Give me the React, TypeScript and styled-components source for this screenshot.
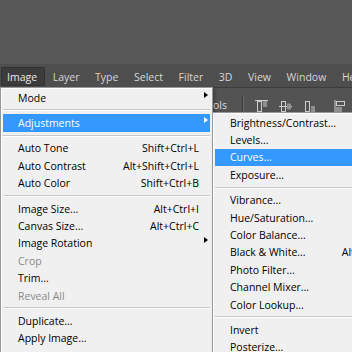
import React from 'react'
import styled, { createGlobalStyle, css } from 'styled-components';

const GlobalStyle = createGlobalStyle`
  html, body {
    margin: 0;
    padding: 0;
    background: #535353;
  }
  * {
    box-sizing: border-box;
  }
`;

const Screen = styled.div`
  width: 352px;
  height: 352px;
  overflow: hidden;
  display: flex;
  flex-direction: column;
  background: #585858;
  font-family: "Open Sans", "Noto Sans", sans-serif;
  font-size: 10.5px;
`;

const TitleArea = styled.div`
  height: 64px;
  flex-shrink: 0;
  background: #585858;
`;

const MenuBar = styled.div`
  height: 23px;
  flex-shrink: 0;
  display: flex;
  align-items: flex-end;
  gap: 1.6px;
  padding: 0 0 1px 1px;
  background: #4e4e4e;
  white-space: nowrap;
`;

const BarItem = styled.div<{ $open?: boolean }>`
  height: 19px;
  display: flex;
  align-items: center;
  padding: 0 7px 0 5px;
  color: #d6d6d6;
  border: 1px solid transparent;
  border-radius: 1px;
  ${({ $open }) =>
    $open &&
    css`
      background: #3c3c3c;
      border-color: #313131;
      color: #e8e8e8;
    `}
`;

const Workspace = styled.div`
  flex: 1;
  position: relative;
  background: #535353;
`;

const OptionsBar = styled.div`
  height: 35px;
  display: flex;
  align-items: center;
  padding-left: 8px;
  border-top: 1px solid #3c3c3c;
  white-space: nowrap;
  color: #dedede;
`;

const OptionGroup = styled.div`
  width: 219px;
  display: flex;
  align-items: center;
  justify-content: flex-end;
  gap: 5px;
`;

const CheckBox = styled.span`
  width: 11px;
  height: 11px;
  border: 1px solid #2e2e2e;
  background: #6a6a6a;
`;

const Divider = styled.span`
  width: 1px;
  height: 20px;
  margin-left: 15px;
  background: #3a3a3a;
  box-shadow: 1px 0 0 #666666;
`;

const AlignGroup = styled.div`
  display: flex;
  align-items: center;
  gap: 11px;
  margin-left: 12px;
  margin-top: 3px;

  & > svg:last-child {
    margin-left: 7px;
  }
`;

const Dropdown = styled.div<{ $left: number; $top: number; $width: number }>`
  position: absolute;
  left: ${({ $left }) => $left}px;
  top: ${({ $top }) => $top}px;
  width: ${({ $width }) => $width}px;
  padding: 1px 2px;
  background: #f0f0f0;
  border: 1px solid #979797;
  box-shadow: inset 1px 1px 0 #ffffff, 2px 2px 3px rgba(0, 0, 0, 0.25);
  color: #000000;
  white-space: nowrap;
`;

const MenuRow = styled.div<{ $active?: boolean; $disabled?: boolean }>`
  position: relative;
  height: 17.4px;
  display: flex;
  align-items: center;
  justify-content: space-between;
  padding: 0 11px 0 15px;
  color: ${({ $disabled }) => ($disabled ? '#8b8b8b' : '#000000')};
  ${({ $active }) =>
    $active &&
    css`
      background: #3399ff;
      color: #ffffff;
    `}
`;

const Shortcut = styled.span`
  margin-left: 24px;
`;

const SubArrow = styled.span<{ $active?: boolean }>`
  position: absolute;
  right: 2px;
  top: calc(50% - 6px);
  width: 0;
  height: 0;
  border-top: 3.5px solid transparent;
  border-bottom: 3.5px solid transparent;
  border-left: 4px solid ${({ $active }) => ($active ? '#ffffff' : '#000000')};
`;

const Separator = styled.div`
  height: 8px;
  padding-top: 3px;

  &::before {
    content: '';
    display: block;
    height: 1px;
    background: #c8c8c8;
    border-bottom: 1px solid #ffffff;
    box-sizing: content-box;
  }
`;

type Entry =
  | 'sep'
  | { label: string; shortcut?: string; sub?: boolean; disabled?: boolean; active?: boolean };

const imageMenu: Entry[] = [
  { label: 'Mode', sub: true },
  'sep',
  { label: 'Adjustments', sub: true, active: true },
  'sep',
  { label: 'Auto Tone', shortcut: 'Shift+Ctrl+L' },
  { label: 'Auto Contrast', shortcut: 'Alt+Shift+Ctrl+L' },
  { label: 'Auto Color', shortcut: 'Shift+Ctrl+B' },
  'sep',
  { label: 'Image Size...', shortcut: 'Alt+Ctrl+I' },
  { label: 'Canvas Size...', shortcut: 'Alt+Ctrl+C' },
  { label: 'Image Rotation', sub: true },
  { label: 'Crop', disabled: true },
  { label: 'Trim...' },
  { label: 'Reveal All', disabled: true },
  'sep',
  { label: 'Duplicate...' },
  { label: 'Apply Image...' },
  { label: 'Calculations...' },
];

const adjustMenu: Entry[] = [
  { label: 'Brightness/Contrast...' },
  { label: 'Levels...', shortcut: 'Ctrl+L' },
  { label: 'Curves...', shortcut: 'Ctrl+M', active: true },
  { label: 'Exposure...' },
  'sep',
  { label: 'Vibrance...' },
  { label: 'Hue/Saturation...', shortcut: 'Ctrl+U' },
  { label: 'Color Balance...', shortcut: 'Ctrl+B' },
  { label: 'Black & White...', shortcut: 'Alt+Shift+Ctrl+B' },
  { label: 'Photo Filter...' },
  { label: 'Channel Mixer...' },
  { label: 'Color Lookup...' },
  'sep',
  { label: 'Invert', shortcut: 'Ctrl+I' },
  { label: 'Posterize...' },
  { label: 'Threshold...' },
];

const barItems = ['Image', 'Layer', 'Type', 'Select', 'Filter', '3D', 'View', 'Window', 'Help'];

function MenuList({ items }: { items: Entry[] }) {
  return (
    <>
      {items.map((item, i) =>
        item === 'sep' ? (
          <Separator key={i} />
        ) : (
          <MenuRow key={i} $active={item.active} $disabled={item.disabled}>
            <span>{item.label}</span>
            {item.shortcut && <Shortcut>{item.shortcut}</Shortcut>}
            {item.sub && <SubArrow $active={item.active} />}
          </MenuRow>
        )
      )}
    </>
  );
}

// align icons of the move tool options
function AlignIcon({ kind }: { kind: 'top' | 'middle' | 'bottom' | 'left' }) {
  const light = '#cdcdcd';
  const dark = '#8f8f8f';
  if (kind === 'left') {
    return (
      <svg width="13" height="13" viewBox="0 0 13 13">
        <rect x="0.5" y="0" width="1" height="13" fill={light} />
        <rect x="2.5" y="1.5" width="8" height="4" fill="none" stroke={light} />
        <rect x="2" y="7" width="6" height="5" fill={dark} />
      </svg>
    );
  }
  const line = kind === 'top' ? 0 : kind === 'middle' ? 6 : 12;
  const shortY = kind === 'top' ? 1 : kind === 'middle' ? 3.5 : 6;
  return (
    <svg width="13" height="13" viewBox="0 0 13 13">
      <rect x="0" y={line} width="13" height="1" fill={light} />
      <rect x="2.5" y="1.5" width="4" height="10" fill="none" stroke={light} />
      <rect x="8" y={shortY} width="4" height="6" fill={dark} />
    </svg>
  );
}

export default function App() {
  return (
    <Screen>
      <GlobalStyle />
      <TitleArea />
      <MenuBar>
        {barItems.map((name) => (
          <BarItem key={name} $open={name === 'Image'}>
            {name}
          </BarItem>
        ))}
      </MenuBar>
      <Workspace>
        <OptionsBar>
          <OptionGroup>
            <CheckBox />
            <span>Show Transform Controls</span>
          </OptionGroup>
          <Divider />
          <AlignGroup>
            <AlignIcon kind="top" />
            <AlignIcon kind="middle" />
            <AlignIcon kind="bottom" />
            <AlignIcon kind="left" />
          </AlignGroup>
        </OptionsBar>

        <Dropdown $left={0} $top={0} $width={213}>
          <MenuList items={imageMenu} />
        </Dropdown>
        <Dropdown $left={212} $top={25} $width={221}>
          <MenuList items={adjustMenu} />
        </Dropdown>
      </Workspace>
    </Screen>
  )
}
